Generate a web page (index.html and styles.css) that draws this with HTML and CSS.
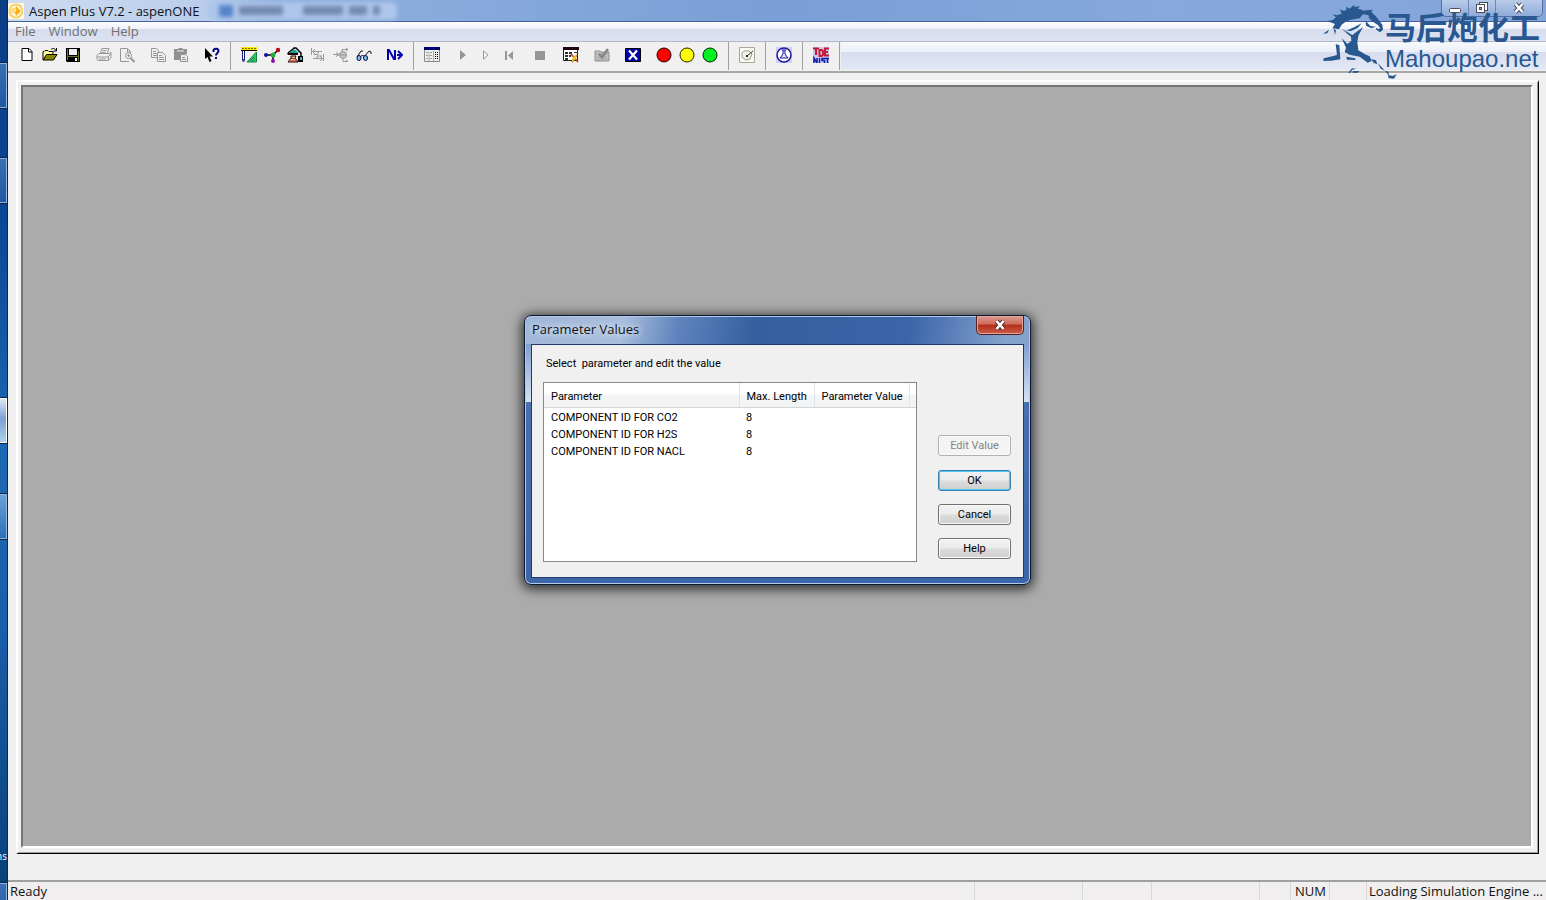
FILE: index.html
```html
<!DOCTYPE html>
<html lang="en">
<head>
<meta charset="utf-8">
<title>Aspen Plus V7.2 - aspenONE</title>
<link rel="stylesheet" href="styles.css">
</head>
<body>
<div class="screen">
  <aside class="desktop">
    <span class="task task-1"></span>
    <span class="task task-2"></span>
    <span class="task task-3 task-active"></span>
    <span class="task task-4"></span>
    <span class="desktop-label">ns</span>
    <span class="task task-5"></span>
  </aside>
  <div class="app">
    <header class="titlebar">
      <svg class="app-icon" viewBox="0 0 16 16"><rect width="16" height="16" fill="#fff7d8"/><circle cx="8" cy="8" r="6.500" fill="none" stroke="#f6c65a" stroke-width="1.500"/><path d="M8 3l5 5-5 5-1-3.500H3.500v-3H7z" fill="#f9b11a"/><path d="M4 5h4v4H4z" fill="#ffe07a"/></svg>
      <h1 class="app-title">Aspen Plus V7.2 - aspenONE</h1>
      <div class="ghost-tab"><i class="ghost ghost-icon"></i><i class="ghost ghost-a"></i><i class="ghost ghost-b"></i><i class="ghost ghost-c"></i><i class="ghost ghost-x"></i></div>
      <div class="window-controls">
        <button class="wc" aria-label="Minimize"><svg viewBox="0 0 14 14"><rect x="1.500" y="7.500" width="11" height="4" rx="1" fill="#fff" stroke="#4b4f5c"/></svg></button>
        <button class="wc" aria-label="Restore"><svg viewBox="0 0 14 14"><rect x="4.500" y="1.500" width="8" height="8" fill="#fff" stroke="#4b4f5c"/><rect x="1.500" y="3.500" width="8" height="8" fill="#fff" stroke="#4b4f5c"/><rect x="4.500" y="6.500" width="2" height="2" fill="#9bb2dc" stroke="#4b4f5c"/></svg></button>
        <button class="wc wc-close" aria-label="Close"><svg viewBox="0 0 14 14"><path d="M3.500 3l7 8M10.500 3l-7 8" stroke="#4b4f5c" stroke-width="4.500"/><path d="M3.500 3l7 8M10.500 3l-7 8" stroke="#fff" stroke-width="2.400"/></svg></button>
      </div>
    </header>

    <nav class="menubar">
      <button class="menu">File</button>
      <button class="menu">Window</button>
      <button class="menu">Help</button>
    </nav>

    <div class="toolbar" role="toolbar" aria-label="Main">
      <div class="section section-first">
        <div class="group">
          <button class="tool" aria-label="New"><svg viewBox="0 0 16 16"><path d="M3 1.500h7l3 3v9H3z" fill="#fff" stroke="#000"/><path d="M9.500 2v3H13" fill="none" stroke="#000"/></svg></button>
          <button class="tool" aria-label="Open"><svg viewBox="0 0 16 16"><path d="M1 13V4.500h1l1-1h3l1 1h4V7" fill="#ffffa0" stroke="#000"/><path d="M1 13l3.500-5.500H15L11.500 13z" fill="#8b8600" stroke="#000"/><path d="M9 2.500c2-2 4-1 5 1M14.500 1v3h-3" fill="none" stroke="#000"/></svg></button>
          <button class="tool" aria-label="Save"><svg viewBox="0 0 16 16"><path d="M1 1h14v14H2l-1-1z"/><path d="M4 2h8v6H4z" fill="#efefef"/><path d="M2 2h1v11H2zM13 4h1v10h-1zM3 9h10v1H3z" fill="#687030"/><path d="M10 11h2v3h-2z" fill="#fff"/></svg></button>
        </div>
        <div class="group">
          <button class="tool" aria-label="Print"><svg viewBox="0 0 16 16" fill="none" stroke="#989898"><path d="M4 7l2-5.500h7L11 7M6.500 3.500h4M5.500 5.500h4"/><path d="M1 8.500l2-2h10l2-1v5l-2.500 3H2l-1-1.500zM1 10h11l3-3.500M3 12h7M12.500 10v3"/></svg></button>
          <button class="tool" aria-label="Print Preview"><svg viewBox="0 0 16 16" fill="none" stroke="#989898"><path d="M10 14.500H1.500v-13h7l3 3V6M8.500 2v3h3"/><circle cx="9.500" cy="8.500" r="3"/><path d="M8 8.500h3M9.500 7v3"/><path d="M11.500 11l4 4" stroke-width="2"/></svg></button>
        </div>
        <div class="group">
          <button class="tool" aria-label="Copy"><svg viewBox="0 0 16 16" fill="#efefef" stroke="#989898"><path d="M1.500 1.500h5l2 2v7h-7zM3 4.500h3M3 6.500h4M3 8.500h4"/><path d="M7.500 5.500h5l3 3v6h-8zM9 8.500h3M9 10.500h5M9 12.500h5"/></svg></button>
          <button class="tool" aria-label="Paste"><svg viewBox="0 0 16 16"><path d="M1 2h4l1-1h3l1 1h4v5H7v6H1z" fill="#909090"/><path d="M4 4h7" stroke="#efefef"/><path d="M7.500 7.500h5l2 2v5h-7z" fill="#efefef" stroke="#909090"/><path d="M9 10.500h3M9 12.500h4" stroke="#909090"/></svg></button>
        </div>
        <div class="group">
          <button class="tool" aria-label="Context Help"><svg viewBox="0 0 16 16"><path d="M1 1v11l2.500-2 2 5 2-1-2-4.500H9z"/><path d="M9.500 5V3.500C10 1 14.500 1 14.500 4c0 2-2.500 2-2.500 4.500" fill="none" stroke="#000080" stroke-width="2"/><path d="M11 10h2v2h-2z" fill="#000080"/></svg></button>
        </div>
      </div>
      <div class="section">
        <div class="group">
          <button class="tool" aria-label="Setup"><svg viewBox="0 0 16 16"><path d="M0 0h16v3H0z" fill="#ffe800"/><path d="M0 3.500h16M2 1v1M5 1v1M8 1v1M11 1v1M14 1v1" stroke="#000"/><path d="M1.500 4v9l1 2 1-2V4" fill="#fff" stroke="#1a1a80"/><path d="M2.500 12v3" stroke="#d01010"/><path d="M15.500 5v10H6z" fill="#20d060" stroke="#108048"/><path d="M13 10v3h-3z" fill="#efefef" stroke="#108048"/></svg></button>
          <button class="tool" aria-label="Components"><svg viewBox="0 0 16 16"><path d="M2 8h7l5-5M9 8v6" fill="none" stroke="#000" stroke-width="1.500"/><circle cx="2" cy="8" r="2" fill="#1010b0"/><circle cx="9" cy="8" r="2.500" fill="#20b040"/><circle cx="14" cy="3" r="2.200" fill="#b01020"/><circle cx="9" cy="14" r="2" fill="#9010b0"/></svg></button>
          <button class="tool" aria-label="Properties"><svg viewBox="0 0 16 16"><path d="M1 6l5-4 1-1h2l5 5v3" fill="none" stroke="#000" stroke-width="1.500"/><path d="M2 6l5-4 5 4z" fill="#18a09c"/><path d="M0 6h11v2H1z" fill="#200"/><path d="M4 9h5l-1 2 3 4H1l3-4z" fill="#f4d4ae" stroke="#300"/><path d="M3 12l2-1 2 1 2-1M3 14h7" fill="none" stroke="#8a1808"/><path d="M11 9h5v6h-5z"/><path d="M13 10h2v3h-2z" fill="#50b0b0"/></svg></button>
          <button class="tool" aria-label="Streams"><svg viewBox="0 0 16 16" fill="none" stroke="#989898"><path d="M1.500 1v7M12 4.500H3M5 2L2.500 4.500 5 7M8 4.500v3H4M13.500 7v7M3 11.500h9M10 9l2.500 2.500L10 14M7 11.500V9h5"/></svg></button>
          <button class="tool" aria-label="Blocks"><svg viewBox="0 0 16 16" fill="none" stroke="#989898"><path d="M0 7.500h6M3 5.500l3 2-3 2"/><circle cx="10" cy="8" r="3.500" fill="#c4c4c4"/><path d="M7 8h7M9 4V2.500h6M10 12v2.500h5M13 1l2 1.500L13 4M13 13l2 1.500"/></svg></button>
          <button class="tool" aria-label="Data Browser"><svg viewBox="0 0 16 16"><path d="M1 10l4-6 2 0M8 10l5-6 2 1v2M5 9q2-1 3 0" fill="none" stroke="#111"/><ellipse cx="3" cy="11" rx="2" ry="2.500" fill="#78c8e8" stroke="#000050"/><ellipse cx="9.500" cy="11" rx="2" ry="2.500" fill="#78c8e8" stroke="#000050"/></svg></button>
        </div>
        <div class="group">
          <button class="tool" aria-label="Next"><svg viewBox="0 0 16 16" fill="none" stroke="#0000b0" stroke-width="2"><path d="M1 13V3h1l5 9h1V3"/><path d="M10 8h5M11 4l4 4-4 4"/></svg></button>
        </div>
      </div>
      <div class="section">
        <div class="group">
          <button class="tool" aria-label="Control Panel"><svg viewBox="0 0 16 16"><path d="M.5 1.500h15v13H.5z" fill="#efefef" stroke="#888"/><path d="M0 0h16v3H0z" fill="#000070"/><path d="M5 5v9M9.500 4v10" stroke="#aaa"/><path d="M2 5.500h2M2 8.500h2M2 11.500h2M6 5.500h2M6 8.500h2M6 11.500h2" stroke="#999"/><path d="M11 5.500h1M13 5.500h1M11 7.500h1M13 7.500h1M11 9.500h1M13 9.500h1M11 11.500h1M13 11.500h1" stroke="#000"/></svg></button>
        </div>
        <div class="group">
          <button class="tool" aria-label="Run"><svg viewBox="0 0 16 16"><path d="M5 3v10l6-5z" fill="#969696"/></svg></button>
          <button class="tool" aria-label="Step"><svg viewBox="0 0 16 16"><path d="M5.500 4v8L10 8z" fill="#fff" stroke="#969696"/></svg></button>
          <button class="tool" aria-label="Reinitialize"><svg viewBox="0 0 16 16"><path d="M4 4h2v9H4zM12 4v9L7 8.500z" fill="#969696"/></svg></button>
        </div>
        <div class="group">
          <button class="tool" aria-label="Stop"><svg viewBox="0 0 16 16"><path d="M3 4h10v9H3z" fill="#969696"/></svg></button>
        </div>
        <div class="group">
          <button class="tool" aria-label="Results"><svg viewBox="0 0 16 16"><path d="M.5 1.500h14v12H.5z" fill="#fff" stroke="#222"/><path d="M0 0h16v3H0z" fill="#200010"/><path d="M2 5h3v2H2zM6 5h3v2H6zM2 8h3v2H2zM6 8h2v2H6zM2 11h3v2H2zM11 5h3v1h-3z" fill="#333"/><path d="M8 7l7 8M14 8l-5 7" stroke="#c03010" stroke-width="1.500"/><path d="M11 9l3-1-1 4-4 3 0-3z" fill="#f0c020"/></svg></button>
        </div>
        <div class="group">
          <button class="tool" aria-label="Reconcile"><svg viewBox="0 0 16 16"><path d="M1 4h5l1 1h8v9H1z" fill="#c2c2c2" stroke="#8e8e8e"/><path d="M1 7h14M3 10h10M3 12h10" stroke="#a4a4a4"/><path d="M5 7l3 3 6-8" fill="none" stroke="#858585" stroke-width="2.500"/></svg></button>
        </div>
        <div class="group">
          <button class="tool" aria-label="Cancel Run"><svg viewBox="0 0 16 16"><path d="M.5 1.500h15v13H.5z" fill="#0000a8" stroke="#000"/><path d="M4 3.500l8 9M12 3.500l-8 9" stroke="#fff" stroke-width="2.200"/></svg></button>
        </div>
        <div class="group">
          <button class="tool" aria-label="Red marker"><svg viewBox="0 0 16 16"><circle cx="8" cy="8" r="7" fill="#f00" stroke="#200"/></svg></button>
          <button class="tool" aria-label="Yellow marker"><svg viewBox="0 0 16 16"><circle cx="8" cy="8" r="7" fill="#ff0" stroke="#220"/></svg></button>
          <button class="tool" aria-label="Green marker"><svg viewBox="0 0 16 16"><circle cx="8" cy="8" r="7" fill="#00f020" stroke="#020"/></svg></button>
        </div>
      </div>
      <div class="section">
        <button class="tool" aria-label="Estimate"><svg viewBox="0 0 16 16"><path d="M.5.5h15v15H.5z" fill="#fbfbf0" stroke="#aaa69a"/><path d="M5 4h5l3 3-2 5-4 1-4-3V6z" fill="#f4f4e8" stroke="#999"/><path d="M8 9l6-5" stroke="#333"/><path d="M7 8h2v2H7z" fill="#222"/></svg></button>
      </div>
      <div class="section">
        <button class="tool" aria-label="Flask"><svg viewBox="0 0 16 16"><rect width="16" height="16" fill="#d0d0f4"/><circle cx="8" cy="8" r="7" fill="#fff" stroke="#1818a0" stroke-width="1.500"/><path d="M6 3h4M7 3v4l-3 4h8L9 7V3" fill="#d6dcfa" stroke="#1818a0"/></svg></button>
      </div>
      <div class="section">
        <button class="tool" aria-label="TDE NIST"><svg viewBox="0 0 16 16"><rect width="16" height="16" fill="#c9cbee"/><path d="M0 1.500h6M3 1v7M6.500 3v6h1.500c3 0 3-6 0-6zM16 1.500h-4v7h4M12 5h3" fill="none" stroke="#c81838" stroke-width="2"/><path d="M1 16v-5l3 5v-5M6.500 11v5M12 11.500H9v2h2.500V16M12 11.500h4M14.500 11v5" fill="none" stroke="#1018b0" stroke-width="1.500"/></svg></button>
      </div>
      <div class="toolbar-fill"></div>
    </div>

    <main class="frame">
      <div class="workspace"></div>
    </main>

    <footer class="statusbar">
      <span class="cell">Ready</span>
      <span class="cell"></span>
      <span class="cell"></span>
      <span class="cell"></span>
      <span class="cell"></span>
      <span class="cell">NUM</span>
      <span class="cell"></span>
      <span class="cell">Loading Simulation Engine ...</span>
    </footer>
  </div>

  <div class="watermark">
    <svg class="horse" viewBox="36 0 240 252" fill="#28588f">
      <path d="M50 64l14-3 11-9-10-9 13 3 14-5-5-13 9 4 10-1 0-11 9 6 14-11 2 6 16-3-7 8 13 3 4 12-11 14-26 4-16 6-12 9-8 14-20-3 8-13z"/>
      <path d="M153 32l32-3-4 7 15 14 18 24 2 15-9 8-13-9 2-4 8 4 3-5-7-9-18-11-10-17-18-4z"/>
      <path d="M164 62l14 16 17 2-14 5-16-8zM170 50l14 6 10 7-15-4z"/>
      <path d="M106 92l26-12 20-10-12 14-20 9z"/>
      <path d="M92 86l32 19 32-24-14 26-3 20 3 24 20 12 14 6 6 14-12 5-24-18-30-6-15-8 4-13-13-28 17 16 12-8-1-13-13-10z"/>
      <path d="M74 132l11 4 3 42-28 4-23 1 1-8 32-8 8-2zM106 170l26 5 2 5-26-1z"/>
      <path d="M36 101l18-12-5 11zM68 86l7 5-3 14zM49 62l16 0-11 5z"/>
      <path d="M181 177l14 4 4 12-12-5zM200 189l22 23-13-6z"/>
      <path d="M111 219l12-14 12 1-12 4-5 9zM126 213l20 0-8 6-14-1zM222 212l11 3 0 10 12 3 12-5-8 13-16-1-2-11z"/>
    </svg>
    <div class="wm-text"><span class="wm-cn" lang="zh">马后炮化工</span><span class="wm-en">Mahoupao.net</span></div>
  </div>

  <section class="dialog" role="dialog" aria-labelledby="dlg-title">
    <div class="dialog-head">
      <h2 class="dialog-title" id="dlg-title">Parameter Values</h2>
      <button class="dialog-close" aria-label="Close dialog"><svg viewBox="0 0 14 12"><path d="M3.500 2l7 8M10.500 2l-7 8" stroke="#5a2a2a" stroke-width="4.500"/><path d="M3.500 2l7 8M10.500 2l-7 8" stroke="#fff" stroke-width="2.600"/></svg></button>
    </div>
    <div class="dialog-body">
      <p class="prompt">Select&nbsp; parameter and edit the value</p>
      <div class="dialog-main">
        <div class="list">
          <table class="params">
            <colgroup><col class="c-name"><col class="c-len"><col class="c-val"><col></colgroup>
            <thead><tr><th>Parameter</th><th>Max. Length</th><th>Parameter Value</th><th></th></tr></thead>
            <tbody>
              <tr><td>COMPONENT ID FOR CO2</td><td>8</td><td></td><td></td></tr>
              <tr><td>COMPONENT ID FOR H2S</td><td>8</td><td></td><td></td></tr>
              <tr><td>COMPONENT ID FOR NACL</td><td>8</td><td></td><td></td></tr>
            </tbody>
          </table>
        </div>
        <div class="actions">
          <button class="btn" disabled>Edit Value</button>
          <button class="btn btn-default">OK</button>
          <button class="btn">Cancel</button>
          <button class="btn">Help</button>
        </div>
      </div>
    </div>
  </section>
</div>
</body>
</html>
```
FILE: styles.css
```css
* { box-sizing: border-box; }
body { margin: 0; font-family: "Open Sans", "Noto Sans", sans-serif; font-size: 13px; color: #111; }
button { font: inherit; color: inherit; border: 0; padding: 0; background: none; }
h1, h2, p { margin: 0; font-weight: 400; }

.screen { position: relative; display: flex; height: 100vh; overflow: hidden; background: #f0f0f0; }

.desktop { flex: 0 0 8px; display: flex; flex-direction: column; overflow: hidden; border-right: 1px solid #12284a; background: linear-gradient(#0c3c85, #0b4794 25%, #1d68b4 50%, #1a5ea8 70%, #083f78); }
.task { flex: 0 0 45px; border: 1px solid #8fb4de; border-left: 0; outline: 1px solid #0b2448; background: linear-gradient(#3a6fb3, #2158a0); }
.task-1 { margin-top: 63px; }
.task-2 { margin-top: 50px; }
.task-3 { margin-top: 195px; }
.task-4 { margin-top: 51px; background: linear-gradient(#6ba0d4, #2a70b8); }
.task-5 { margin-top: 20px; }
.task-active { background: linear-gradient(#dbe7f5, #7d9fd3 45%, #a9d3ea); border-color: #fff; }
.desktop-label { align-self: flex-end; margin-top: 310px; font-size: 10px; line-height: 14px; color: #fff; }

.app { flex: 1; min-width: 0; display: flex; flex-direction: column; }

.titlebar { flex: 0 0 22px; display: flex; align-items: center; border-bottom: 1px solid #44609a; background: linear-gradient(90deg, #cfdcf0, #b9cdeb 13%, #8fb0de 17%, #87a9db 30%, #7a9fd6 50%, #86a8dc 75%, #84a5da); }
.app-icon { width: 16px; height: 16px; }
.app-title { margin-left: 5px; font-size: 13px; line-height: 20px; white-space: nowrap; }
.ghost-tab { display: flex; align-items: center; gap: 6px; width: 190px; height: 18px; margin-left: 8px; padding-left: 12px; border-radius: 6px; background: #aec6ea; filter: blur(2px); }
.ghost { height: 9px; background: #7388ad; }
.ghost-icon { width: 14px; height: 12px; background: #5585c9; }
.ghost-a { width: 44px; }
.ghost-b { width: 40px; margin-left: 14px; }
.ghost-c { width: 18px; }
.ghost-x { width: 7px; }
.window-controls { align-self: flex-start; display: flex; height: 17px; margin-left: auto; margin-right: 3px; border: 1px solid #56719f; border-top: 0; border-radius: 0 0 5px 5px; overflow: hidden; }
.wc { display: flex; align-items: center; justify-content: center; width: 27px; border-right: 1px solid #6d87b5; background: linear-gradient(#b9cbe9, #8fabd9); }
.wc-close { width: 46px; border-right: 0; }
.wc svg { width: 14px; height: 14px; }

.menubar { flex: 0 0 20px; display: flex; padding-right: 7px; border-bottom: 1px solid #b4b8c4; background: linear-gradient(#fdfdff, #eff2fa 34%, #d7dded 38%, #dce2f3); }
.menu { padding: 0 6px 0 7px; line-height: 19px; color: #707070; }

.toolbar { flex: 0 0 31px; display: flex; border-bottom: 2px solid #a8a8a8; background: #f0f0f0; padding-bottom: 1px; }
.section { display: flex; align-items: center; gap: 8px; padding: 0 7px 2px 6px; border-right: 1px solid #a0a0a0; }
.section-first { padding-left: 7px; }
.group { display: flex; }
.tool { display: flex; align-items: center; justify-content: center; width: 23px; height: 24px; }
.tool svg { width: 16px; height: 16px; }
.toolbar-fill { flex: 1; margin-left: 1px; background: linear-gradient(#f8f9fd, #eceff8 35%, #d6dcee 38%, #e4e9f7); }

.frame { flex: 1; display: flex; margin: 7px 7px 26px 8px; padding: 3px 5px 5px 3px; border: 2px solid #fff; border-right: 1px solid #000; border-bottom: 1px solid #000; box-shadow: inset -1px -1px #a0a0a0; }
.workspace { flex: 1; border: 2px solid #fff; border-top-color: #757575; border-left-color: #757575; background: #ababab; }

.statusbar { flex: 0 0 20px; display: grid; grid-template-columns: 1fr 108px 69px 108px 31px 39px 37px 179px; border-top: 2px solid #a0a0a0; background: #f0eeee; }
.cell { padding: 0 0 0 4px; line-height: 18px; white-space: nowrap; border-right: 1px solid #d8d8d8; }
.cell:first-child { padding-left: 2px; }
.cell:last-child { padding-left: 2px; border-right: 0; }

.watermark { position: absolute; top: 0; right: 6px; display: flex; color: #28588f; }
.horse { width: 80px; height: 84px; margin-right: -18px; overflow: visible; }
.wm-text { display: flex; flex-direction: column; padding-top: 8px; }
.wm-cn { font: 700 31px/36px "Noto Sans CJK SC", sans-serif; }
.wm-en { font: 24px/30px "Liberation Sans", sans-serif; }

.dialog { position: absolute; left: calc(50% - 249px); top: 50%; width: 507px; transform: translateY(-50%); padding: 0 6px 6px; border: 1px solid #0d1a33; border-radius: 7px; box-shadow: inset 0 0 0 1px #b4c9e8, 0 2px 12px 2px rgba(0, 0, 0, .75); background: linear-gradient(transparent 28px, #7f9fd0 28px, #d6e2f3 86px, #4a6fae 86px, #3c66a8), linear-gradient(100deg, #9fb6d8, #a9bedd 18%, #5f84bd 28%, #34609f 42%, #3a65aa 70%, #86a3cc 88%, #7e9cc8); }
.dialog-head { display: flex; align-items: flex-start; justify-content: space-between; height: 28px; }
.dialog-title { padding: 0 1px; font-size: 13px; line-height: 27px; text-shadow: 0 0 6px #dfe8f5, 0 0 6px #dfe8f5; }
.dialog-close { display: flex; align-items: center; justify-content: center; width: 48px; height: 19px; border: 1px solid #4e2020; border-top: 0; border-radius: 0 0 5px 5px; box-shadow: inset 0 0 0 1px #e3a59b; background: linear-gradient(#dc9a90, #cf6b5c 45%, #b42c18 50%, #c9604a); }
.dialog-close svg { width: 14px; height: 12px; }
.dialog-body { padding: 10px 12px 15px 11px; border: 1px solid #203a6c; background: #f0f0f0; font: 11px/17px Roboto, sans-serif; color: #000; }
.prompt { padding-left: 3px; margin-bottom: 10px; }
.dialog-main { display: flex; justify-content: space-between; align-items: flex-end; }
.list { width: 374px; height: 180px; border: 1px solid #828790; background: #fff; }
.params { width: 100%; table-layout: fixed; border-collapse: collapse; }
.c-name { width: 195px; }
.c-len { width: 75px; }
.c-val { width: 95px; }
.params th, .params td { padding: 0 0 0 7px; text-align: left; font-weight: 400; white-space: nowrap; }
.params th { height: 24px; padding-top: 3px; border-right: 1px solid #dfe2e6; border-bottom: 1px solid #d5d5d5; background: linear-gradient(#fff 45%, #f4f5f7 50%, #f1f2f4); }
.params th:last-child { border-right: 0; }
.params td { height: 17px; }
.params tbody::before { content: ""; display: block; height: 1px; }
.actions { display: flex; flex-direction: column; gap: 13px; padding-bottom: 3px; }
.btn { width: 73px; height: 21px; border: 1px solid #707070; border-radius: 3px; box-shadow: inset 0 0 0 1px #fafafa; background: linear-gradient(#f2f2f2, #ebebeb 48%, #dcdcdc 52%, #cfcfcf); }
.btn:disabled { border-color: #adb2b5; background: #f4f4f4; color: #838383; margin-bottom: 1px; }
.btn-default { border-color: #3c7fb1; box-shadow: inset 0 0 0 1px #48c8ec; }
```
